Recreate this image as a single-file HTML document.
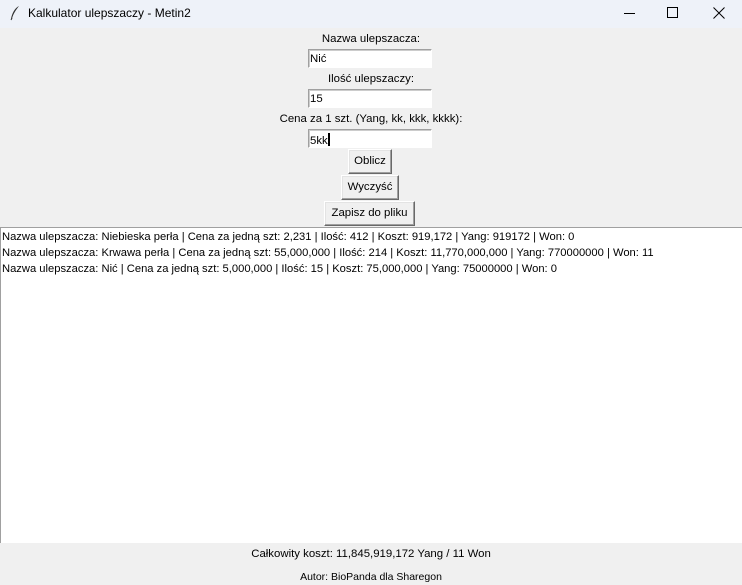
<!DOCTYPE html>
<html><head><meta charset="utf-8"><style>
*{margin:0;padding:0;box-sizing:border-box}
body{width:742px;height:585px;background:#f0f0f0;font-family:"Liberation Sans",sans-serif;font-size:11.4px;color:#000;position:relative;overflow:hidden}
.a{position:absolute;white-space:nowrap}
.c{left:0;width:742px;text-align:center}
.tb{position:absolute;left:0;top:0;width:742px;height:28px;background:#eef2f9}
.in{position:absolute;left:308px;width:124px;height:19px;background:#fff;border:1px solid #a0a0a0;border-right-color:#fff;border-bottom-color:#fff;padding:3px 0 0 1px;box-shadow:inset 1px 1px 0 #ccc}
.bt{position:absolute;height:25px;background:#f0f0f0;border:1px solid;border-color:#fff #696969 #696969 #fff;box-shadow:inset -1px -1px 0 #a0a0a0,inset 1px 1px 0 #e3e3e3;text-align:center;line-height:23px}
.ta{position:absolute;left:0;top:227px;width:742px;height:316px;background:#fff;border-top:1px solid #a0a0a0;border-left:1px solid #a0a0a0;font-size:11.2px}
.ta div{height:16px;line-height:16px;padding-left:1px}
</style></head><body>
<div class="tb"></div>
<svg class="a" style="left:9px;top:5px" width="12" height="16" viewBox="0 0 12 16"><path d="M10 1C6 3 3 8 2 14L3 14C4 9 7 5 10 1Z" fill="#333"/><path d="M3 13L2 15" stroke="#333"/></svg>
<div class="a" style="left:28px;top:6px;font-size:12px">Kalkulator ulepszaczy - Metin2</div>
<div class="a" style="left:624px;top:13px;width:11px;height:1px;background:#000"></div>
<div class="a" style="left:667px;top:7px;width:11px;height:11px;border:1px solid #000"></div>
<svg class="a" style="left:713px;top:7px" width="12" height="12"><path d="M0.5 0.5L11.5 11.5M11.5 0.5L0.5 11.5" stroke="#000"/></svg>
<div class="a c" style="top:33px">Nazwa ulepszacza:</div>
<div class="in" style="top:49px">Nić</div>
<div class="a c" style="top:73px">Ilość ulepszaczy:</div>
<div class="in" style="top:89px">15</div>
<div class="a c" style="top:113px">Cena za 1 szt. (Yang, kk, kkk, kkkk):</div>
<div class="in" style="top:129px">5kk<span style="display:inline-block;width:2px;height:13px;background:#000;vertical-align:-2px"></span></div>
<div class="bt" style="left:348px;top:149px;width:44px">Oblicz</div>
<div class="bt" style="left:341px;top:175px;width:58px">Wyczyść</div>
<div class="bt" style="left:324px;top:201px;width:91px">Zapisz do pliku</div>
<div class="ta">
<div style="margin-top:1px">Nazwa ulepszacza: Niebieska perła | Cena za jedną szt: 2,231 | Ilość: 412 | Koszt: 919,172 | Yang: 919172 | Won: 0</div>
<div>Nazwa ulepszacza: Krwawa perła | Cena za jedną szt: 55,000,000 | Ilość: 214 | Koszt: 11,770,000,000 | Yang: 770000000 | Won: 11</div>
<div>Nazwa ulepszacza: Nić | Cena za jedną szt: 5,000,000 | Ilość: 15 | Koszt: 75,000,000 | Yang: 75000000 | Won: 0</div>
</div>
<div class="a c" style="top:548px">Całkowity koszt: 11,845,919,172 Yang / 11 Won</div>
<div class="a c" style="top:571px;font-size:10.5px">Autor: BioPanda dla Sharegon</div>
</body></html>
